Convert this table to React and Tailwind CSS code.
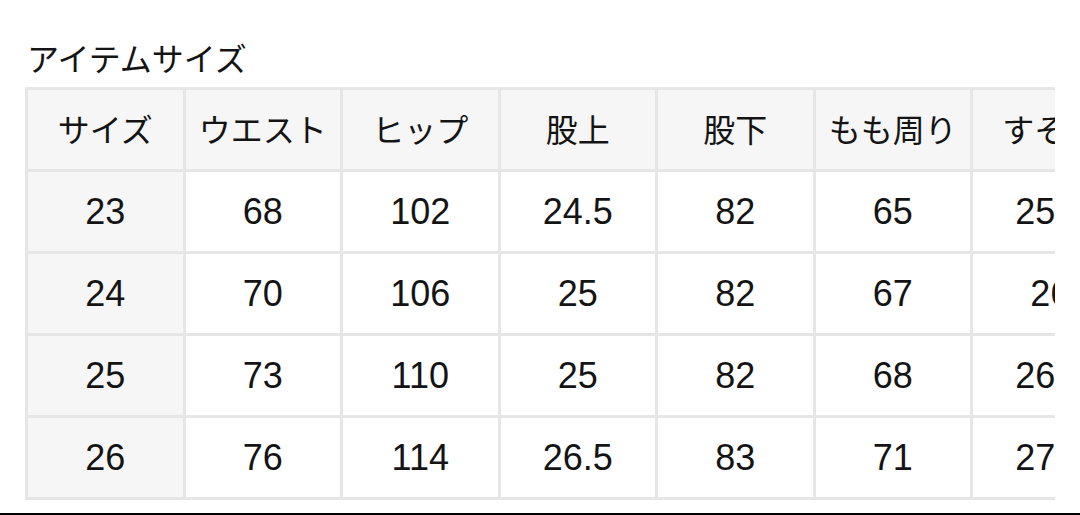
const headers = ['サイズ', 'ウエスト', 'ヒップ', '股上', '股下', 'もも周り', 'すそ幅']

const rows = [
    ['23', '68', '102', '24.5', '82', '65', '25.5'],
    ['24', '70', '106', '25', '82', '67', '26'],
    ['25', '73', '110', '25', '82', '68', '26.5'],
    ['26', '76', '114', '26.5', '83', '71', '27.5'],
]

const font = { fontFamily: '"Liberation Sans", "Noto Sans CJK JP", sans-serif' }

const App = () => {
    return (
        <div className="w-[1080px] h-[515px] bg-white relative overflow-hidden text-[#141414]" style={font}>
            <div className="pl-[25px] pt-[40px]">
                <h2 className="text-[32px] leading-[40px] pl-[2px] font-normal">アイテムサイズ</h2>
                <div className="w-[1030px] overflow-hidden mt-[7px]">
                    <table className="table-fixed border-collapse w-[1103px]">
                        <colgroup>
                            {headers.map((h) => (
                                <col key={h} className="w-[157.5px]" />
                            ))}
                        </colgroup>
                        <thead>
                            <tr className="h-[82px]">
                                {headers.map((h) => (
                                    <th
                                        key={h}
                                        className="border-[3px] border-[#e6e6e6] bg-[#f6f6f6] text-[32px] font-normal text-center whitespace-nowrap p-0 pt-[2px]"
                                    >
                                        {h}
                                    </th>
                                ))}
                            </tr>
                        </thead>
                        <tbody>
                            {rows.map((row, i) => (
                                <tr key={i} className="h-[82px]">
                                    {row.map((v, j) => (
                                        <td
                                            key={j}
                                            className={`border-[3px] border-[#e6e6e6] text-[36px] text-center whitespace-nowrap p-0 ${j === 0 ? 'bg-[#f6f6f6]' : 'bg-white'}`}
                                        >
                                            {v}
                                        </td>
                                    ))}
                                </tr>
                            ))}
                        </tbody>
                    </table>
                </div>
            </div>
            {/* bottom edge */}
            <div className="absolute left-0 right-0 bottom-0 h-[2px] bg-black" />
        </div>
    )
}

export default App
